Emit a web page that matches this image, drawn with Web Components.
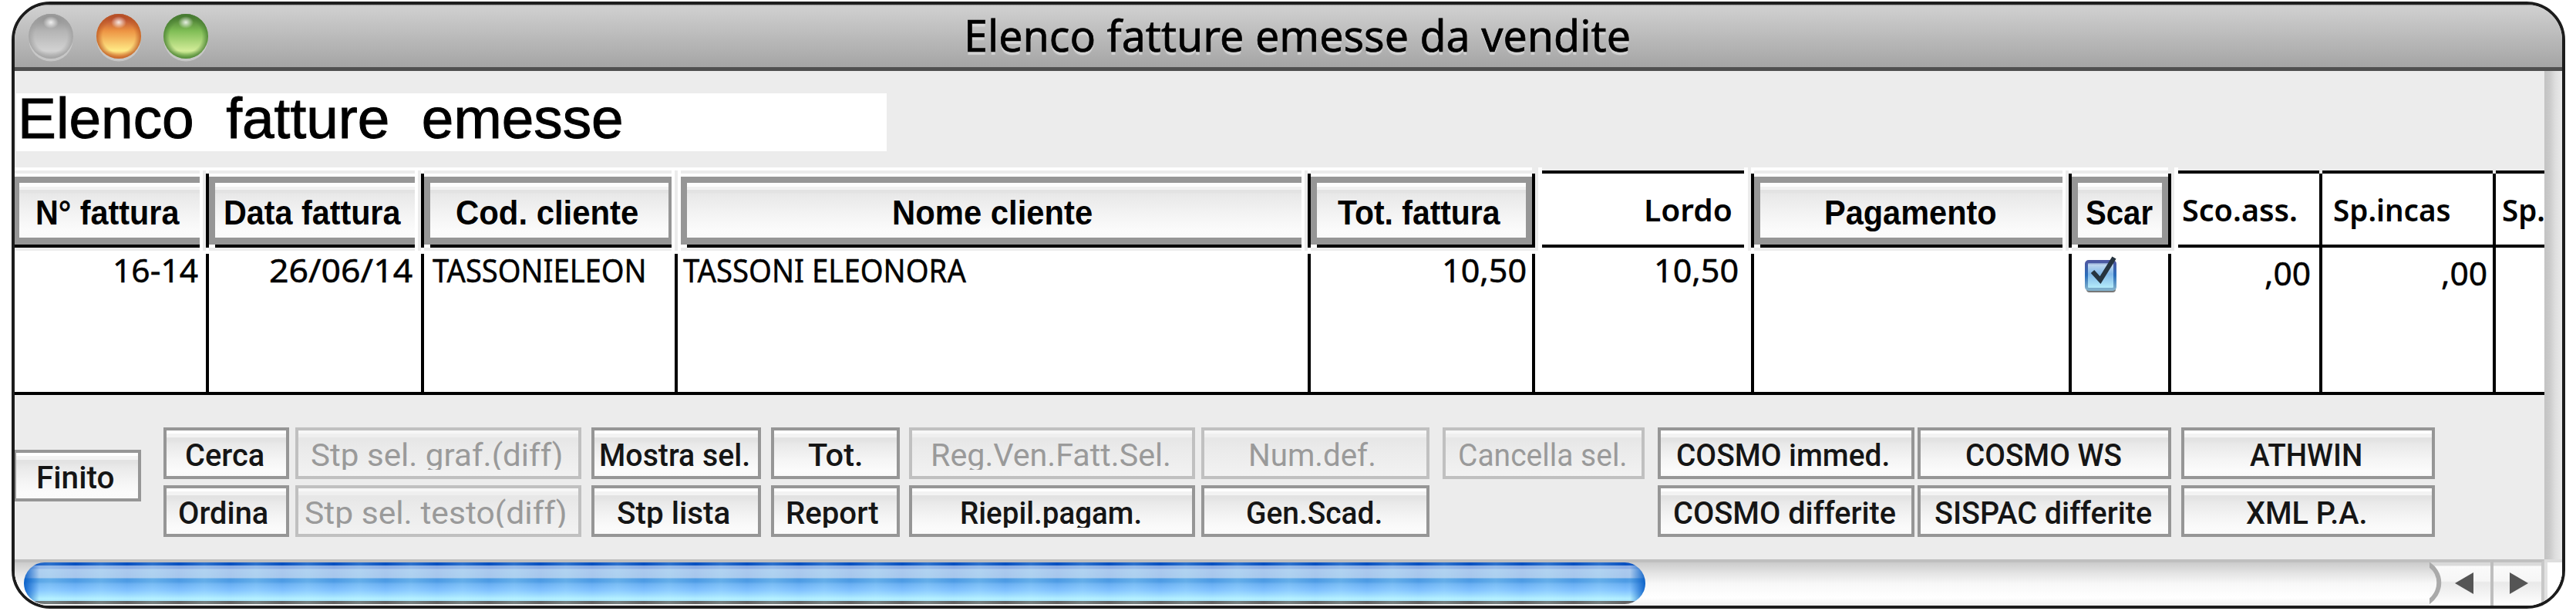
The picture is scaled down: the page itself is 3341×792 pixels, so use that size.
<!DOCTYPE html>
<html lang="it">
<head>
<meta charset="utf-8">
<title>Elenco fatture emesse da vendite</title>
<style>
html,body{margin:0;background:#fff}
body{padding:2px 0 0 15px;height:790px;box-sizing:border-box;overflow:hidden}
</style>
</head>
<body>
<mac-window></mac-window>
<script>
const define=(name,html,setup)=>customElements.define(name,class extends HTMLElement{
  connectedCallback(){
    if(this.shadowRoot)return;
    const root=this.attachShadow({mode:'open'});
    root.innerHTML=typeof html==='function'?html(this):html;
    if(setup)setup(this,root);
  }
});

/* A line of text whose ink starts at x, is w wide and sits on baseline b. */
const pen=document.createElement('canvas').getContext('2d');
define('fit-text',`<style>
:host{display:block;width:max-content;white-space:pre;line-height:1.2}
span{display:inline-block;transform-origin:0 50%}
</style><span><slot></slot></span>`,(el,root)=>{
  const size=+el.getAttribute('size'),weight=el.getAttribute('weight')||'400',face=el.getAttribute('face')||'Noto Sans';
  el.style.font=`${weight} ${size}px/1.2 "${face}", sans-serif`;
  pen.font=`${weight} ${size}px "${face}", sans-serif`;
  const m=pen.measureText(el.textContent);
  const ink=m.actualBoundingBoxLeft+m.actualBoundingBoxRight;
  const s=(+el.getAttribute('w')-3)/ink;
  const base=(size*1.2-m.fontBoundingBoxAscent-m.fontBoundingBoxDescent)/2+m.fontBoundingBoxAscent;
  el.style.marginTop=(+el.getAttribute('b')-base)+'px';
  el.style.marginLeft=(+el.getAttribute('x')+2+m.actualBoundingBoxLeft*s)+'px';
  root.querySelector('span').style.transform=`scaleX(${s})`;
});
const fit=(t,x,w,b,size,weight,face)=>`<fit-text x="${x}" w="${w}" b="${b}" size="${size}" weight="${weight||400}" face="${face||'Noto Sans'}">${t}</fit-text>`;

define('traffic-light',el=>{
  const p={
    grey:['#858585','#b4b4b4','#d2d2d2','#a0a0a0'],
    amber:['#a3322a','#ed9443','#ffea86','#bd5a25'],
    green:['#3c6a29','#7fbd55','#d2ec98','#4a8034']
  }[el.getAttribute('tone')];
  return `<style>:host{display:block;width:60px;height:64px}svg{display:block}</style>
<svg width="60" height="64" viewBox="0 0 60 64">
<defs><linearGradient id="g" x1="0" y1="0" x2="0" y2="1"><stop offset="0" stop-color="${p[0]}"/><stop offset=".38" stop-color="${p[1]}"/><stop offset=".82" stop-color="${p[2]}"/><stop offset="1" stop-color="${p[1]}"/></linearGradient>
<radialGradient id="r"><stop offset=".72" stop-color="${p[3]}" stop-opacity="0"/><stop offset="1" stop-color="${p[3]}" stop-opacity=".85"/></radialGradient>
<radialGradient id="h"><stop offset="0" stop-color="#fff" stop-opacity=".85"/><stop offset="1" stop-color="#fff" stop-opacity="0"/></radialGradient></defs>
<circle cx="30" cy="34" r="28.5" fill="#d8d8d8" opacity=".6"/>
<circle cx="30" cy="30" r="29" fill="url(#g)"/><circle cx="30" cy="30" r="29" fill="url(#r)"/>
<ellipse cx="30" cy="12" rx="10" ry="8" fill="url(#h)"/></svg>`});

define('title-bar',`<style>
:host{display:flex;align-items:flex-start;box-sizing:border-box;height:86px;border-bottom:5px solid #505050;background:linear-gradient(#999 0,#d0d0d0 2px,#a5a5a5)}
.lights{display:flex;gap:27.5px;padding:11px 0 0 17px;width:235px}
.name{text-shadow:0 4px 1px rgba(225,225,225,.7);color:#000;-webkit-text-stroke:.7px #000}
</style><div class="lights"><traffic-light tone="grey"></traffic-light><traffic-light tone="amber"></traffic-light><traffic-light tone="green"></traffic-light></div>
<div class="name">${fit('Elenco fatture emesse da vendite',982,861,61,57,400)}</div>`);

define('list-heading',`<style>
:host{display:flex;height:125px;padding:29px 0 0 2px;box-sizing:border-box}
div{width:1129px;height:75px;background:#fff;display:flex;align-items:flex-start;color:#000;-webkit-text-stroke:1px #000}
</style><div>${fit('Elenco  fatture  emesse',6,780,58,75,400,'Liberation Sans')}</div>`);

/* Sortable column header; "edge" is the lead-in, "closed" draws the right bevel. */
define('sort-header',el=>`<style>
:host{display:flex;height:108px;background:#fff;box-sizing:border-box}
.lead{flex:none;width:4px;margin:8px 0 4px;background:#000}
.lead.soft{background:#ececec;margin:4px 0 0}
.gap{flex:none;width:4px}
.main{flex:1;display:flex;flex-direction:column;padding-top:4px}
.rule{height:4px;background:#ececec;margin-bottom:4px}
.face{height:88px;box-sizing:border-box;border:8px solid #969696;border-bottom-width:9px;border-left-width:${el.hasAttribute('edge')?8:6}px;border-right-width:${el.hasAttribute('closed')?(el.getAttribute('closed')||8):0}px;
background:linear-gradient(#fdfdfd 0 5px,#f2f2f2 5px 9px,#e3e3e3 9px 13px,#e8e8e8 14px,#f4f4f4 42px,#fbfbfb 62px,#fafafa);display:flex;align-items:flex-start}
.base{height:4px;background:#000;margin-left:${el.hasAttribute('edge')?8:0}px}
.foot{height:4px;background:#ececec}
.trail{flex:none;width:4px;background:#ececec;margin-top:4px}
</style>
${el.getAttribute('edge')==='black'?'<div class="lead"></div>':el.getAttribute('edge')==='soft'?'<div class="lead soft"></div><div class="gap"></div>':''}
<div class="main"><div class="rule"></div><div class="face"><slot></slot></div><div class="base"></div><div class="foot"></div></div>
${el.hasAttribute('flush')?'':'<div class="gap"></div>'}${el.hasAttribute('trail')?'<div class="trail"></div>':''}`);

define('plain-header',el=>`<style>
:host{display:flex;height:108px;box-sizing:border-box}
.line{flex:none;width:4px;background:#000;margin:${el.hasAttribute('joined')?'8px 0 0':'8px 0 4px'}}
.soft{flex:none;width:4px;background:#ececec;margin-top:4px}
.gap{flex:none;width:5px;background:#fff}
.main{flex:1;min-width:0;overflow:hidden;margin-top:4px;height:100px;box-sizing:border-box;border:solid #000;border-width:4px 0;background:#fff;display:flex;align-items:flex-start;box-shadow:0 4px #fff}
</style><div class="line"></div>${el.hasAttribute('joined')?'':'<div class="soft"></div><div class="gap"></div>'}
<div class="main"><slot></slot></div>${el.hasAttribute('trail')?'<div class="gap"></div><div class="soft"></div>':''}`);

define('check-mark',`<style>:host{display:block;margin:3px 0 0 17px}svg{display:block}</style>
<svg width="42" height="48" viewBox="0 0 42 48"><defs><linearGradient id="b" x1="0" y1="0" x2="0" y2="1"><stop offset="0" stop-color="#5060a8"/><stop offset=".12" stop-color="#bdd5ee"/><stop offset=".45" stop-color="#82b8e8"/><stop offset="1" stop-color="#b9f1fc"/></linearGradient>
<linearGradient id="s" x1="0" y1="0" x2="0" y2="1"><stop offset="0" stop-color="#4d58a2"/><stop offset=".5" stop-color="#2a6dba"/><stop offset="1" stop-color="#80b0cc"/></linearGradient></defs>
<rect x="2" y="9" width="38" height="38" rx="4" fill="#777"/><rect x="2" y="7" width="37" height="36" rx="3" fill="url(#b)" stroke="url(#s)" stroke-width="4"/>
<path d="M10 20L20 31L38 2" fill="none" stroke="#26333f" stroke-width="6"/></svg>`);

const H=(t,x,w)=>fit(t,x,w,55,44,700,'Liberation Sans');
const P=(t,x,w)=>fit(t,x,w,62,40,600);
const C=(t,x,w,b)=>fit(t,x,w,b||42,42,400);
define('invoice-table',`<style>
:host{display:block;width:3281px;height:295px;color:#000}
.row{display:grid;grid-template-columns:248px 279px 329px 821px 291px 284px 412px 129px 196px 225px 67px}
.body{height:183px;background:#fff;border-bottom:4px solid #000;-webkit-text-stroke:.5px #000}
.cell{display:flex;align-items:flex-start;box-sizing:border-box;border-left:4px solid #000;margin-top:4px;min-width:0}
.cell.first{border-left:0}
.cell.up{margin-top:0;padding-top:4px}
</style>
<div class="row">
<sort-header trail>${H('N° fattura',21,188)}</sort-header>
<sort-header edge="black" trail>${H('Data fattura',11,231)}</sort-header>
<sort-header edge="black" closed="4">${H('Cod. cliente',32,238)}</sort-header>
<sort-header edge="soft" trail>${H('Nome cliente',266,260)}</sort-header>
<sort-header edge="black" closed flush>${H('Tot. fattura',25,214)}</sort-header>
<plain-header trail>${P('Lordo',133,113)}</plain-header>
<sort-header edge="black" trail>${H('Pagamento',83,224)}</sort-header>
<sort-header edge="black" closed flush>${H('Scar',9,89)}</sort-header>
<plain-header>${P('Sco.ass.',4,150)}</plain-header>
<plain-header joined>${P('Sp.incas',13,153)}</plain-header>
<plain-header joined>${P('Sp.',7,56)}</plain-header>
</div>
<div class="row body">
<div class="cell first">${C('16-14',128,111,38)}</div>
<div class="cell">${C('26/06/14',78,187,38)}</div>
<div class="cell">${C('TASSONIELEON',9,277,38)}</div>
<div class="cell">${C('TASSONI ELEONORA',5,370,38)}</div>
<div class="cell">${C('10,50',171,108,38)}</div>
<div class="cell">${C('10,50',155,108,38)}</div>
<div class="cell"></div>
<div class="cell"><check-mark></check-mark></div>
<div class="cell">${C(',00',120,60,42)}</div>
<div class="cell up">${C(',00',153,60,42)}</div>
<div class="cell up"></div>
</div>`);

define('push-button',`<style>
:host{display:flex;align-items:flex-start;box-sizing:border-box;height:67px;border:4px solid #969696;color:#151515;
background:linear-gradient(#fff 0 4px,#f3f3f3 4px 9px,#e3e3e3 9px 13px,#e9e9e9 18px,#f5f5f5 38px,#fbfbfb 52px,#fafafa)}
:host([disabled]){border-color:#c0c0c0;color:#9a9a9a;background:linear-gradient(#f7f7f7 0 4px,#efefef 4px 9px,#e7e7e7 9px 13px,#eaeaea 22px,#f2f2f2)}
.ink{height:51px;margin-bottom:-8px;overflow:hidden;width:100%}
</style><div class="ink"><slot></slot></div>`);
/* x0/x1: button edges; t0/t1: caption ink edges, in window coordinates. */
const B=(t,x0,x1,t0,t1,off)=>`<push-button ${off?'disabled':''} style="width:${x1-x0}px">${fit(t,t0-x0-4,t1-t0,46,41.5,off?400:500,'Roboto')}</push-button>`;
const pair=(w,gap,a,b)=>`<div class="pair" style="width:${w}px;margin-right:${gap}px">${a}${b||''}</div>`;
define('command-bar',`<style>
:host{display:flex;align-items:flex-start;height:213px;padding-top:42px;box-sizing:border-box}
.pair{display:flex;flex-direction:column;gap:8px;flex:none}
.exit{padding-top:29px;margin:0 29px 0 -2px;flex:none}
</style>
<div class="exit">${B('Finito',17,183,48,148)}</div>
${pair(163,8,B('Cerca',212,375,240,343),B('Ordina',212,375,231,348))}
${pair(371,13,B('Stp sel. graf.(diff)',383,754,402,729,1),B('Stp sel. testo(diff)',383,754,394,734,1))}
${pair(220,13,B('Mostra sel.',767,987,778,972),B('Stp lista',767,987,799,947))}
${pair(167,12,B('Tot.',1000,1167,1046,1118),B('Report',1000,1167,1020,1140))}
${pair(371,8,B('Reg.Ven.Fatt.Sel.',1179,1550,1208,1517,1),B('Riepil.pagam.',1179,1550,1246,1480))}
${pair(296,17,B('Num.def.',1558,1854,1620,1783,1),B('Gen.Scad.',1558,1854,1616,1792))}
${pair(262,17,B('Cancella sel.',1871,2133,1891,2109,1))}
${pair(333,4,B('COSMO immed.',2150,2483,2174,2450),B('COSMO differite',2150,2483,2170,2459))}
${pair(329,13,B('COSMO WS',2487,2816,2549,2752),B('SISPAC differite',2487,2816,2508,2791))}
${pair(329,0,B('ATHWIN',2829,3158,2916,3063),B('XML P.A.',2829,3158,2911,3069))}`);

define('scroll-bar',`<style>
:host{display:flex;height:60px;box-sizing:border-box;background:#fff}
.track{width:3132px;box-sizing:border-box;padding:4px 0 0 12px;background:linear-gradient(#bfbfbf 0 4px,#cbcbcb 4px,#e4e4e4 18px,#f8f8f8 32px,#fff 50px,#f0f0f0)}
.thumb{width:2103px;height:54px;box-sizing:border-box;border-radius:27px/27px;overflow:hidden;
background:linear-gradient(90deg,#0058c4e0 0,#0058c400 20px,#0058c400 2083px,#0058c4e0 2103px),repeating-linear-gradient(90deg,#fff0 0,#c8ffff30 33px,#fff0 67px),linear-gradient(#0850c0 0 4px,#8badE4 4px 8px,#abc9ee 9px,#a6c6ec 20px,#4d9be4 21px 25px,#69aef2 28px,#7fc0ff 36px,#98d8ff 42px,#b2eeff 47px,#a5e4ff 50px,#606060 50px)}
.arrow{height:60px;box-sizing:border-box;border-top:4px solid #c0c0c0;background:linear-gradient(#dadada 0 4px,#fafafa 5px,#f6f6f6 24px,#e9e9e9 26px,#f3f3f3 40px,#fff)}
svg{display:block}
.l{width:83px;border-right:4px solid #bebebe}
.r{width:66px;border-right:4px solid #c8c8c8}
.corner{width:23px;background:#fff;box-shadow:inset 0 4px #dedede,inset 4px 0 #e2e2e2}
</style>
<div class="track"><div class="thumb"></div></div>
<div class="arrow l"><svg width="79" height="56" viewBox="0 0 79 56">
<defs><linearGradient id="t" x1="0" y1="0" x2="0" y2="1"><stop offset="0" stop-color="#cbcbcb"/><stop offset=".5" stop-color="#f8f8f8"/><stop offset="1" stop-color="#fff"/></linearGradient></defs>
<path d="M0 0C16 14 16 40 -2 54H0Z" fill="url(#t)"/><path d="M-5 0C18 12 18 40 -5 54" fill="none" stroke="#aaa" stroke-width="6"/>
<path d="M33 27L57 13V41Z" fill="#555"/></svg></div>
<div class="arrow r"><svg width="62" height="56" viewBox="0 0 62 56"><path d="M45 27L21 13V41Z" fill="#555"/></svg></div>
<div class="corner"></div>`);

define('mac-window',`<style>
:host{display:flex;flex-direction:column;box-sizing:border-box;width:3312px;height:787px;border:4px solid #1c1c1c;border-radius:50px;overflow:hidden;background:#ececec}
.content{display:flex;height:633px}
.sheet{width:3281px;overflow:hidden}
.gutter{width:23px;background:linear-gradient(90deg,#c2c2c2 0,#cbcbcb 7px,#dedede 14px,#eaeaea)}
</style><title-bar></title-bar>
<div class="content"><div class="sheet"><list-heading></list-heading><invoice-table></invoice-table><command-bar></command-bar></div><div class="gutter"></div></div>
<scroll-bar></scroll-bar>`);
</script>
</body>
</html>
